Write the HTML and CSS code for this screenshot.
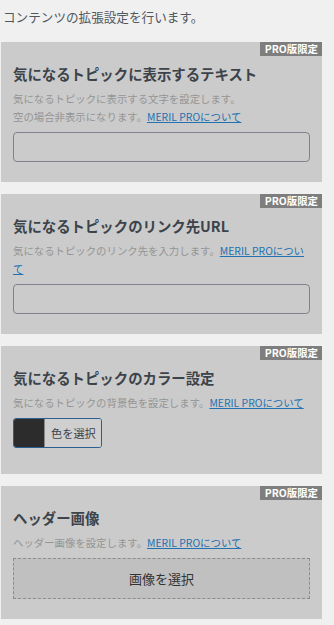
FILE: index.html
```html
<!DOCTYPE html>
<html lang="ja">
<head>
<meta charset="utf-8">
<title>拡張設定</title>
<link rel="stylesheet" href="styles.css">
</head>
<body>
<p class="intro">コンテンツの拡張設定を行います。</p>

<section class="card">
  <span class="badge">PRO版限定</span>
  <h2 class="title">気になるトピックに表示するテキスト</h2>
  <p class="desc">気になるトピックに表示する文字を設定します。<br>空の場合非表示になります。<a class="link" href="#">MERIL PROについて</a></p>
  <div class="input"></div>
</section>

<section class="card">
  <span class="badge">PRO版限定</span>
  <h2 class="title">気になるトピックのリンク先URL</h2>
  <p class="desc">気になるトピックのリンク先を入力します。<a class="link" href="#">MERIL PROについて</a></p>
  <div class="input"></div>
</section>

<section class="card">
  <span class="badge">PRO版限定</span>
  <h2 class="title">気になるトピックのカラー設定</h2>
  <p class="desc">気になるトピックの背景色を設定します。<a class="link" href="#">MERIL PROについて</a></p>
  <div class="color-btn"><span class="swatch"></span><span class="color-label">色を選択</span></div>
</section>

<section class="card">
  <span class="badge">PRO版限定</span>
  <h2 class="title">ヘッダー画像</h2>
  <p class="desc">ヘッダー画像を設定します。<a class="link" href="#">MERIL PROについて</a></p>
  <div class="image-btn">画像を選択</div>
</section>
</body>
</html>
```

FILE: styles.css
```css
* { box-sizing: border-box; }

body {
  margin: 0;
  background: #f0f0f0;
  font-family: "Noto Sans CJK JP", "Noto Sans", sans-serif;
  width: 334px;
}

.intro {
  margin: 0;
  padding: 8px 3px 0;
  font-size: 12.6px;
  line-height: 18px;
  color: #50575e;
}

.card {
  position: relative;
  width: 321px;
  margin: 16px 0 0 1px;
  background: #cbcbcb;
  padding: 22px 12px 20px 12px;
}

.card + .card { margin-top: 12px; }

.badge {
  position: absolute;
  top: 0;
  right: 0;
  background: #7e7e7e;
  color: #fff;
  font-size: 10.4px;
  font-weight: 700;
  line-height: 14px;
  height: 14px;
  padding: 0 4px 0 5px;
}

.title {
  margin: 0 0 6px;
  font-size: 14.4px;
  line-height: 20px;
  font-weight: 700;
  color: #3c434a;
}

.desc {
  margin: 0 0 6px;
  font-size: 10.4px;
  line-height: 18px;
  color: #959595;
}

.link {
  color: #2271b1;
  text-decoration: underline;
}

.input {
  height: 30px;
  border: 1px solid #80838a;
  border-radius: 4px;
}

.color-btn {
  display: flex;
  width: 89px;
  height: 30px;
  border: 1px solid #2c5f8f;
  border-radius: 3px;
  overflow: hidden;
  margin-bottom: 6px;
}

.swatch {
  width: 30px;
  background: #2c2c2c;
}

.color-label {
  flex: 1;
  background: #cfcfcf;
  border-left: 1px solid #888;
  font-size: 11.2px;
  line-height: 28px;
  color: #3c434a;
  padding-left: 6px;
}

.image-btn {
  height: 41px;
  border: 1px dashed #8c8c8c;
  background: #c0c0c0;
  display: flex;
  align-items: center;
  justify-content: center;
  font-size: 13px;
  color: #333;
}
```
